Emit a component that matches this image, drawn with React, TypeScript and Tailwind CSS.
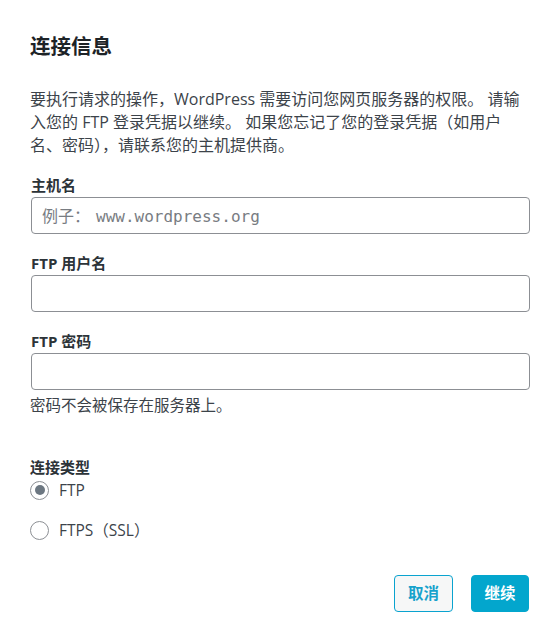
import React from "react";

const sans = { fontFamily: '"Open Sans", "Noto Sans CJK SC", sans-serif' };

function Field({ label, placeholder, mt }: { label: string; placeholder?: string; mt: string }) {
  return (
    <div className={mt}>
      <div className="text-[15px] font-bold leading-[20px] text-[#2c3338]">{label}</div>
      <div className="mt-[2px] flex h-[37px] w-[499px] items-center rounded-[4px] border border-[#8c8f94] bg-white px-[10px]">
        {placeholder ? (
          <span className="text-[16px] text-[#787c82]" style={{ fontFamily: '"DejaVu Sans Mono", "Noto Sans CJK SC", monospace' }}>
            <span className="mr-[6px]" style={{ fontFamily: '"Noto Sans CJK SC", sans-serif' }}>例子：</span>www.wordpress.org
          </span>
        ) : null}
      </div>
    </div>
  );
}

function Radio({ checked, label, mt }: { checked?: boolean; label: string; mt: string }) {
  return (
    <div className={`flex items-center ${mt}`}>
      <div className="flex h-[19px] w-[19px] items-center justify-center rounded-full border border-[#8c8f94] bg-white">
        {checked ? <div className="h-[10px] w-[10px] rounded-full bg-[#6c7781]" /> : null}
      </div>
      <span className="ml-[10px] text-[15.5px] leading-[20px] text-[#3c434a]">{label}</span>
    </div>
  );
}

export default function App() {
  return (
    <div className="h-[642px] w-[558px] overflow-hidden bg-white pl-[30px] pr-[28px]" style={sans}>
      <h1 className="pt-[32px] text-[20.5px] font-bold leading-[28px] text-[#1d2327]">连接信息</h1>
      <p className="mt-[28px] text-[16px] leading-[23px] text-[#3c434a]">
        要执行请求的操作，WordPress 需要访问您网页服务器的权限。 请输入您的 FTP 登录凭据以继续。 如果您忘记了您的登录凭据（如用户名、密码），请联系您的主机提供商。
      </p>
      <div className="ml-[1px]">
        <Field label="主机名" placeholder="x" mt="mt-[18px]" />
        <Field label="FTP 用户名" mt="mt-[19px]" />
        <Field label="FTP 密码" mt="mt-[19px]" />
      </div>
      <div className="mt-[4px] text-[15.5px] leading-[23px] text-[#3c434a]">密码不会被保存在服务器上。</div>
      <div className="mt-[40px] text-[15px] font-bold leading-[20px] text-[#2c3338]">连接类型</div>
      <Radio checked label="FTP" mt="mt-[3px]" />
      <Radio label="FTPS（SSL）" mt="mt-[20px]" />
      <div className="mt-[35px] flex justify-end gap-[18px] pr-[1px]">
        <button className="h-[37px] w-[59px] rounded-[4px] border border-[#0aa3cf] bg-[#f6f7f7] text-[15.5px] font-bold text-[#16a2cc]">
          取消
        </button>
        <button className="h-[37px] w-[58px] rounded-[4px] border border-[#03a6cd] bg-[#03a6cd] text-[15.5px] font-bold text-white">
          继续
        </button>
      </div>
    </div>
  );
}
